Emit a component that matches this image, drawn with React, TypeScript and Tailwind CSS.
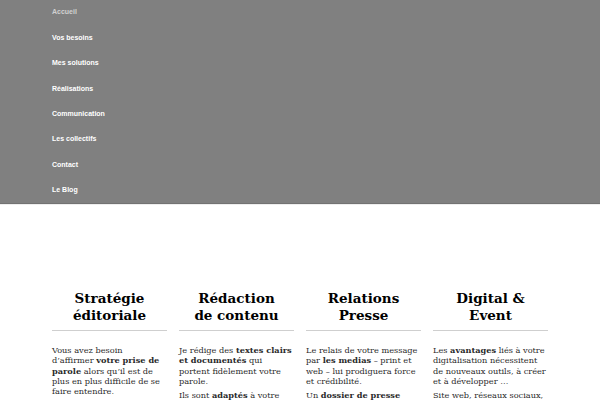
const menu = [
  "Accueil",
  "Vos besoins",
  "Mes solutions",
  "Réalisations",
  "Communication",
  "Les collectifs",
  "Contact",
  "Le Blog",
];

type Col = { title: [string, string]; paras: React.ReactNode[] };

const cols: Col[] = [
  {
    title: ["Stratégie", "éditoriale"],
    paras: [
      <>
        Vous avez besoin
        <br />
        d’affirmer <b>votre prise de parole</b> alors qu’il est de plus en plus difficile de se faire entendre.
      </>,
      <>
        <b>Ma</b> stratégie éditoriale adaptée vous accompagne.
      </>,
    ],
  },
  {
    title: ["Rédaction", "de contenu"],
    paras: [
      <>
        Je rédige des <b>textes clairs et documentés</b> qui portent fidèlement votre parole.
      </>,
      <>
        Ils sont <b>adaptés</b> à votre cible, qualité et valeurs.
      </>,
    ],
  },
  {
    title: ["Relations", "Presse"],
    paras: [
      <>
        Le relais de votre message par <b>les medias</b> – print et web – lui prodiguera force et crédibilité.
      </>,
      <>
        Un <b>dossier de presse</b> adapté et réalisé avec soin.
      </>,
    ],
  },
  {
    title: ["Digital &", "Event"],
    paras: [
      <>
        Les <b>avantages</b> liés à votre digitalisation nécessitent de nouveaux outils, à créer et à développer …
      </>,
      <>Site web, réseaux sociaux, blogs, newsletters …</>,
    ],
  },
];

export default function App() {
  return (
    <div className="h-[400px] w-[600px] overflow-hidden bg-white">
      <nav className="border-b border-[#727272] bg-[#808080] font-['Liberation_Sans',Arial,sans-serif]">
        <ul className="mx-auto w-[496px]">
          {menu.map((m, i) => (
            <li
              key={m}
              className={
                i === 0
                  ? "flex h-[25.4px] items-center text-[7px] font-bold text-[#d0d0d0]"
                  : "flex h-[25.4px] items-center text-[7px] font-bold text-white"
              }
            >
              {m}
            </li>
          ))}
        </ul>
      </nav>
      <div className="h-px bg-[#eeeeee]" />
      <main className="mx-auto grid w-[496px] grid-cols-4 gap-x-3 pt-[85px] font-['DejaVu_Serif',serif] text-[#2a2a2a]">
        {cols.map((c) => (
          <section key={c.title[0]}>
            <h2 className="border-b border-[#cfcfcf] pb-[6px] text-center text-[13.5px] leading-[17px] font-bold text-black">
              {c.title[0]}
              <br />
              {c.title[1]}
            </h2>
            <div className="pt-[14px] text-[8.2px] leading-[10.3px]">
              {c.paras.map((p, j) => (
                <p key={j} className="mb-[4px]">
                  {p}
                </p>
              ))}
            </div>
          </section>
        ))}
      </main>
    </div>
  );
}
